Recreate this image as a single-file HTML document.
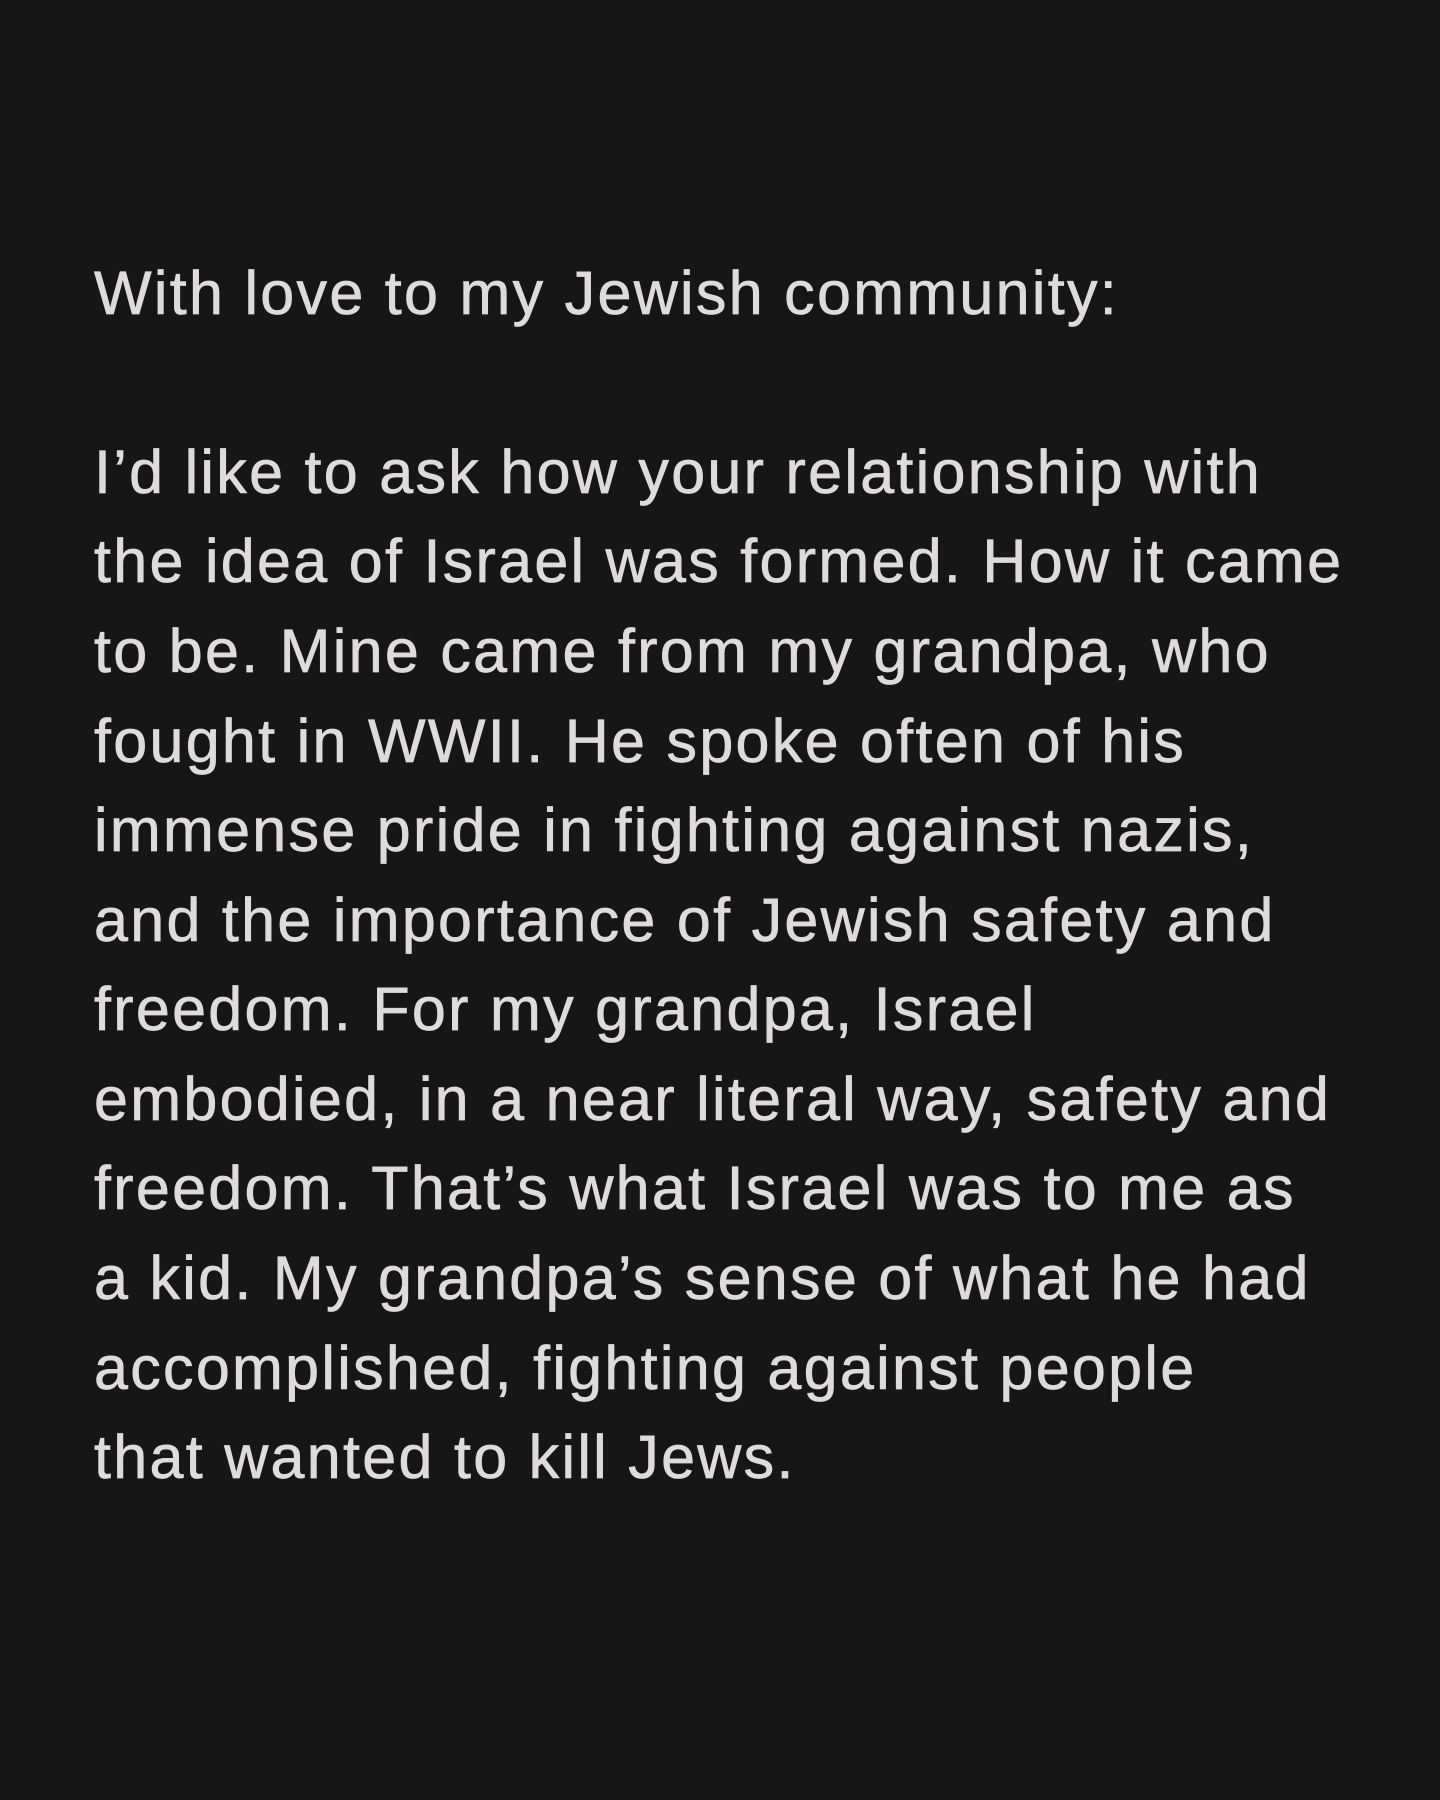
<!DOCTYPE html>
<html><head><meta charset="utf-8"><style>
html,body{margin:0;padding:0;width:1440px;height:1800px;background:#161616;overflow:hidden}
.l{position:absolute;left:94px;height:90px;line-height:90px;white-space:nowrap;color:#dddbdb;font-family:"Liberation Sans",sans-serif;font-size:61px;letter-spacing:2.3px;-webkit-text-stroke:0.7px #dddbdb}
</style></head><body>
<div class="l" style="top:248px">With love to my Jewish community:</div>
<div class="l" style="top:427px">I’d like to ask how your relationship with</div>
<div class="l" style="top:516px">the idea of Israel was formed. How it came</div>
<div class="l" style="top:606px">to be. Mine came from my grandpa, who</div>
<div class="l" style="top:696px">fought in WWII. He spoke often of his</div>
<div class="l" style="top:785px">immense pride in fighting against nazis,</div>
<div class="l" style="top:875px">and the importance of Jewish safety and</div>
<div class="l" style="top:964px">freedom. For my grandpa, Israel</div>
<div class="l" style="top:1054px">embodied, in a near literal way, safety and</div>
<div class="l" style="top:1143px">freedom. That’s what Israel was to me as</div>
<div class="l" style="top:1233px">a kid. My grandpa’s sense of what he had</div>
<div class="l" style="top:1323px">accomplished, fighting against people</div>
<div class="l" style="top:1412px">that wanted to kill Jews.</div>
</body></html>
